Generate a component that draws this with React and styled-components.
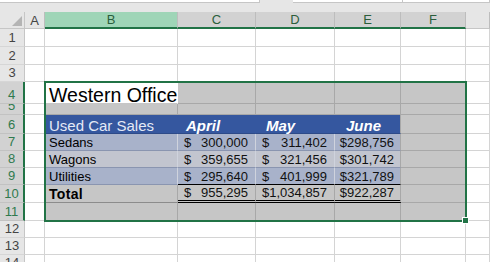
import React from 'react'
import styled, { createGlobalStyle } from 'styled-components'

const GlobalStyle = createGlobalStyle`
  html, body {
    margin: 0;
    padding: 0;
    background: #fff;
    overflow: hidden;
  }
  body {
    font-family: 'Liberation Sans', Arial, sans-serif;
  }
`

const GREEN = '#217346'
const GRID = '#d4d4d4'
const GRAY = '#c6c6c6'
const GRAY_LINE = '#a8a8a8'
const BLUE = '#35579f'
const BAND = '#a8b2ca'
const BAND_ALT = '#c2c5cf'
const BAND_LINE = '#8a95b0'
const BAND_V = '#cfd3dd'

const ROW_HEIGHTS = [18, 18, 17, 22, 11, 19, 17, 17, 17, 18, 18, 17, 17, 17]

const TopStrip = styled.div`
  height: 12px;
  background: #e6e6e6;
  display: flex;
  align-items: flex-start;
`

const BarBox = styled.div`
  box-sizing: border-box;
  height: 3px;
  width: ${p => (p.$w ? `${p.$w}px` : 'auto')};
  flex: ${p => (p.$w ? 'none' : 1)};
  margin-left: ${p => p.$gap || 0}px;
  background: #fff;
  border-bottom: 1px solid #c6c6c6;
  border-right: 1px solid #c6c6c6;
`

const SheetFrame = styled.div`
  position: relative;
`

const Sheet = styled.div`
  display: grid;
  grid-template-columns: 25px 20px 133px 78px 79px 66px 65px 24px;
  grid-template-rows: 17px ${ROW_HEIGHTS.map(h => `${h}px`).join(' ')};
`

const OverlayGrid = styled(Sheet)`
  position: absolute;
  inset: 0;
  pointer-events: none;
`

const Corner = styled.div`
  box-sizing: border-box;
  background: #e6e6e6;
  border-right: 1px solid #c6c6c6;
  border-bottom: 1px solid #c6c6c6;
  display: flex;
  align-items: flex-end;
  justify-content: flex-end;
  padding: 0 2px 2px 0;
`

const headBg = { plain: '#e6e6e6', selected: '#d2d2d2', active: '#9fd5b7' }

const ColHead = styled.div`
  box-sizing: border-box;
  display: flex;
  align-items: center;
  justify-content: center;
  background: ${p => headBg[p.$state]};
  color: ${p => (p.$state === 'plain' ? '#444' : '#2b5e3c')};
  border-right: 1px solid #bdbdbd;
  border-bottom: ${p => (p.$state === 'plain' ? '1px solid #c6c6c6' : `2px solid ${GREEN}`)};
  font-size: 13px;
  line-height: 15px;
`

const RowHead = styled.div`
  box-sizing: border-box;
  display: flex;
  align-items: flex-end;
  justify-content: center;
  overflow: hidden;
  padding-bottom: 1px;
  background: ${p => (p.$sel ? '#d2d2d2' : '#e6e6e6')};
  color: ${p => (p.$sel ? '#2f7a4e' : '#444')};
  border-bottom: 1px solid ${p => (p.$sel ? '#c2c2c2' : '#d6d6d6')};
  border-right: ${p => (p.$sel ? `2px solid ${GREEN}` : '1px solid #c6c6c6')};
  font-size: 13px;
  line-height: 15px;
`

const Cell = styled.div`
  box-sizing: border-box;
  min-width: 0;
  display: flex;
  align-items: flex-end;
  justify-content: flex-start;
  padding: 0 4px;
  white-space: nowrap;
  background: ${p => p.$fill || '#fff'};
  border-right: 1px solid ${p => p.$v || GRID};
  border-bottom: ${p => p.$bottom || `1px solid ${p.$h || GRID}`};
  color: #111;
  font-size: 13px;
  line-height: 15px;
`

const TitleCell = styled(Cell)`
  font-size: 19.5px;
  line-height: 16px;
  color: #000;
  border-right-color: #fff;
  border-bottom-color: ${GRAY};
`

const BandTitle = styled(Cell)`
  font-size: 15px;
  color: #e4e9f6;
`

const MonthCell = styled(Cell)`
  font-size: 15px;
  font-weight: bold;
  font-style: italic;
  color: #fff;
  padding-left: ${p => p.$indent}px;
`

const LabelCell = styled(Cell)`
  font-weight: ${p => (p.$strong ? 'bold' : 'normal')};
  font-size: ${p => (p.$strong ? 14 : 13)}px;
  letter-spacing: ${p => (p.$strong ? '0.3px' : 'normal')};
  color: #000;
`

const MoneyCell = styled(Cell)`
  justify-content: space-between;
  padding: 0 7px 0 6px;
`

const CurrencyCell = styled(Cell)`
  justify-content: flex-end;
  padding: 0 6px 0 0;
`

const Selection = styled.div`
  grid-column: 3 / 8;
  grid-row: 5 / 13;
  margin: -1px;
  border: 2px solid ${GREEN};
  position: relative;
`

const FillHandle = styled.div`
  position: absolute;
  right: -4px;
  bottom: -4px;
  width: 5px;
  height: 5px;
  background: ${GREEN};
  border: 1px solid #fff;
`

const sales = [
  { label: 'Sedans', april: '300,000', may: '311,402', june: '$298,756', fill: BAND },
  { label: 'Wagons', april: '359,655', may: '321,456', june: '$301,742', fill: BAND_ALT },
  { label: 'Utilities', april: '295,640', may: '401,999', june: '$321,789', fill: BAND },
]

const grayCell = key => <Cell key={key} $fill={GRAY} $h={GRAY_LINE} $v={GRAY_LINE} />

const Money = ({ value, ...rest }) => (
  <MoneyCell {...rest}>
    <span>$</span>
    <span>{value}</span>
  </MoneyCell>
)

const tableRows = {
  4: [
    <TitleCell key="b">Western Office</TitleCell>,
    grayCell('c'), grayCell('d'), grayCell('e'), grayCell('f'),
  ],
  5: [grayCell('b'), grayCell('c'), grayCell('d'), grayCell('e'), grayCell('f')],
  6: [
    <BandTitle key="b" $fill={BLUE} $v={BLUE} $h="#2d4a88">Used Car Sales</BandTitle>,
    <MonthCell key="c" $fill={BLUE} $v={BLUE} $h="#2d4a88" $indent={8}>April</MonthCell>,
    <MonthCell key="d" $fill={BLUE} $v={BLUE} $h="#2d4a88" $indent={10}>May</MonthCell>,
    <MonthCell key="e" $fill={BLUE} $v={GRAY_LINE} $h="#2d4a88" $indent={11}>June</MonthCell>,
    grayCell('f'),
  ],
  10: [
    <LabelCell key="b" $fill={GRAY} $v={GRAY_LINE} $h="#8c8c8c" $strong>Total</LabelCell>,
    <Money key="c" value="955,295" $fill={GRAY} $v={GRAY_LINE} $bottom="3px double #000" />,
    <Money key="d" value="1,034,857" $fill={GRAY} $v={GRAY_LINE} $bottom="3px double #000" />,
    <CurrencyCell key="e" $fill={GRAY} $v={GRAY_LINE} $bottom="3px double #000">$922,287</CurrencyCell>,
    grayCell('f'),
  ],
  11: [grayCell('b'), grayCell('c'), grayCell('d'), grayCell('e'), grayCell('f')],
}

sales.forEach((s, i) => {
  const last = i === sales.length - 1
  const line = last ? '#000' : BAND_LINE
  tableRows[7 + i] = [
    <LabelCell key="b" $fill={s.fill} $v={BAND_V} $h={BAND_LINE}>{s.label}</LabelCell>,
    <Money key="c" value={s.april} $fill={s.fill} $v={BAND_V} $h={line} />,
    <Money key="d" value={s.may} $fill={s.fill} $v={BAND_V} $h={line} />,
    <CurrencyCell key="e" $fill={s.fill} $v={GRAY_LINE} $h={line}>{s.june}</CurrencyCell>,
    grayCell('f'),
  ]
})

const SheetRow = ({ n }) => {
  const selected = n >= 4 && n <= 11
  const middle = tableRows[n] || ['b', 'c', 'd', 'e', 'f'].map(k => <Cell key={k} />)
  return (
    <>
      <RowHead $sel={selected}>{n}</RowHead>
      <Cell />
      {middle}
      <Cell />
    </>
  )
}

const App = () => (
  <>
    <GlobalStyle />
    <TopStrip>
      <BarBox $w={260} />
      <BarBox $w={110} $gap={33} />
      <BarBox />
    </TopStrip>
    <SheetFrame>
      <Sheet>
        <Corner>
          <svg width="10" height="10" viewBox="0 0 10 10">
            <polygon points="10,0 10,10 0,10" fill="#b4b4b4" />
          </svg>
        </Corner>
        <ColHead $state="plain">A</ColHead>
        <ColHead $state="active">B</ColHead>
        <ColHead $state="selected">C</ColHead>
        <ColHead $state="selected">D</ColHead>
        <ColHead $state="selected">E</ColHead>
        <ColHead $state="selected">F</ColHead>
        <ColHead $state="plain" />
        {ROW_HEIGHTS.map((_, i) => (
          <SheetRow key={i} n={i + 1} />
        ))}
      </Sheet>
      <OverlayGrid>
        <Selection>
          <FillHandle />
        </Selection>
      </OverlayGrid>
    </SheetFrame>
  </>
)

export default App
